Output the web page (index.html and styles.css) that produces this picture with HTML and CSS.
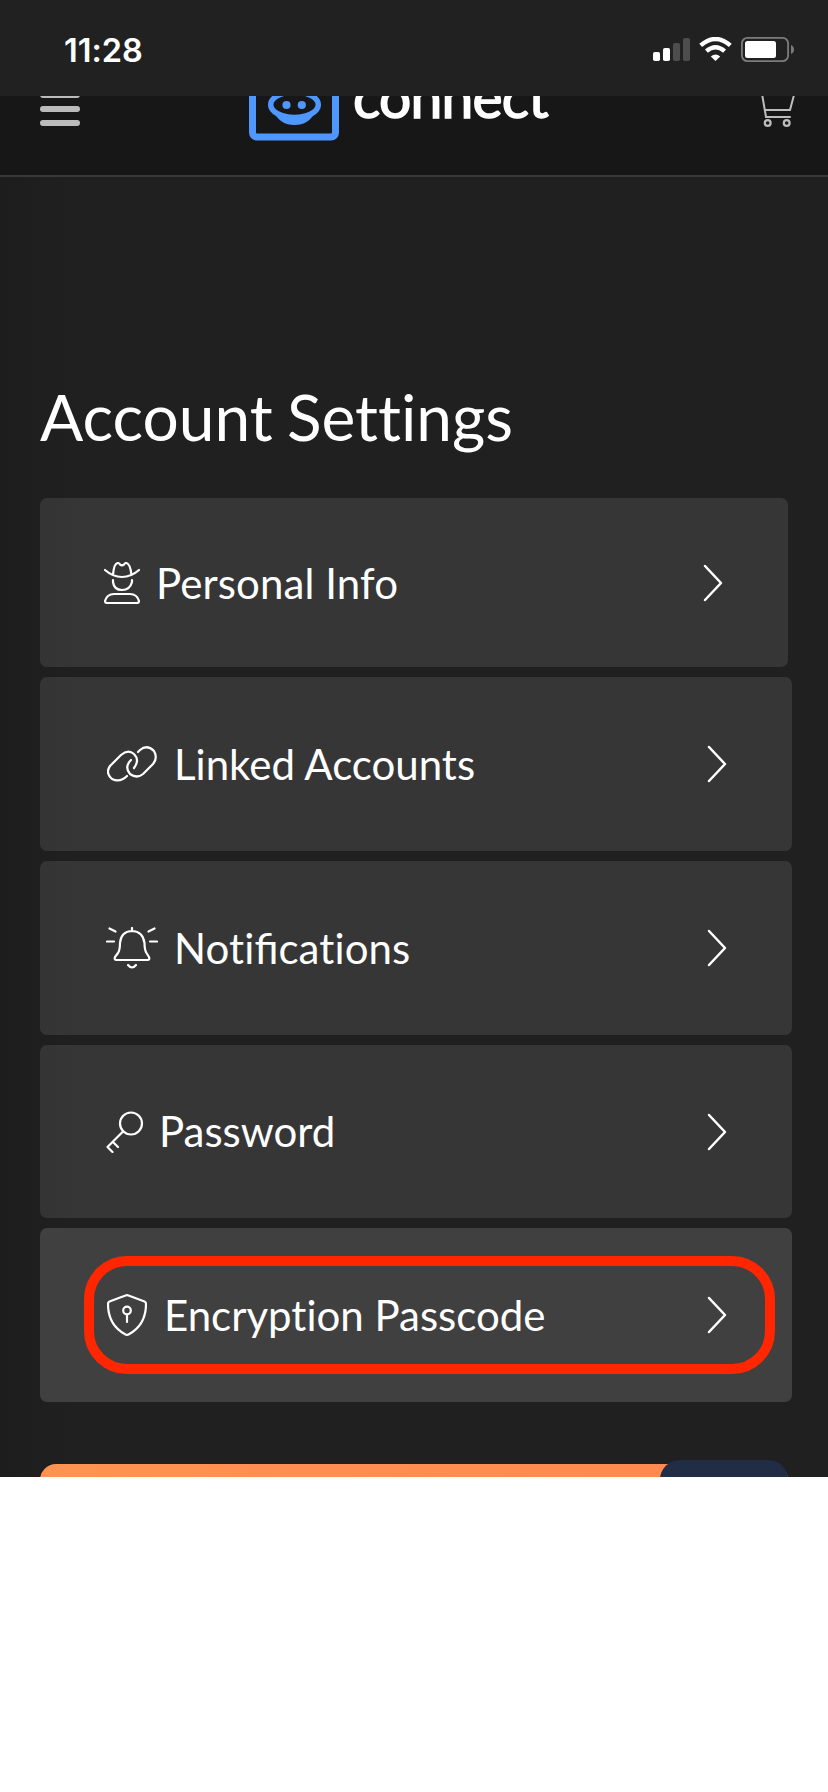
FILE: index.html
```html
<!DOCTYPE html>
<html lang="en">
<head>
    <meta charset="UTF-8">
    <meta name="viewport" content="width=device-width, initial-scale=1.0">
    <title>Account Settings</title>
    <link rel="stylesheet" href="styles.css">
</head>
<body>
    <div class="screen">
        <div class="status-bar">
            <span class="time">11:28</span>
            <svg class="status-icons" width="142" height="26" viewBox="0 0 142 26">
                <g fill="#fff">
                    <rect x="0" y="15" width="7" height="9" rx="1.8" />
                    <rect x="10" y="11" width="7" height="13" rx="1.8" />
                    <rect x="20" y="6" width="7" height="18" rx="1.8" fill="#4d4d4d" />
                    <rect x="30" y="1" width="7" height="23" rx="1.8" fill="#4d4d4d" />
                    <path d="M62.5 24 L57.8 19.4 Q62.5 15.6 67.2 19.4 Z" />
                    <rect x="92" y="4" width="31" height="17" rx="2.5" />
                </g>
                <path d="M47.7 8.4 Q62.5 -4.4 77.3 8.4 M53.4 14.1 Q62.5 6.2 71.6 14.1" fill="none" stroke="#fff" stroke-width="4.3" />
                <rect x="88.9" y="0.9" width="46.2" height="23.2" rx="5.5" fill="none" stroke="#7c7c7c" stroke-width="1.8" />
                <path d="M138 8 Q141 9.5 141 12.5 Q141 15.5 138 17 Z" fill="#7c7c7c" />
            </svg>
        </div>
        <header class="header">
            <button class="menu" aria-label="Menu"><i></i><i></i><i></i></button>
            <div class="logo">
                <svg width="90" height="90" viewBox="0 0 90 90">
                    <rect x="3.5" y="3.5" width="83" height="82.5" rx="4.5" fill="none" stroke="#4f97ff" stroke-width="7" />
                    <ellipse cx="45.5" cy="53.7" rx="23.8" ry="12.8" fill="none" stroke="#4f97ff" stroke-width="5.5" />
                    <path d="M25 61 Q45.5 70 66 61 Q60 74 45.5 74 Q31 74 25 61 Z" fill="#4f97ff" />
                    <circle cx="37.5" cy="54" r="4.1" fill="#4f97ff" />
                    <circle cx="52.8" cy="54" r="4.1" fill="#4f97ff" />
                </svg>
                <span class="brand">connect</span>
            </div>
            <svg class="cart" width="38" height="44" viewBox="0 0 38 44" fill="none" stroke="#bdbdbd" stroke-width="2" stroke-linecap="round">
                <path d="M1 5 H4 L9 34 H33 M4.5 12 H37 L33 27 H8" />
                <circle cx="10.7" cy="40" r="2.9" stroke-width="2.2" />
                <circle cx="29.7" cy="40" r="2.9" stroke-width="2.2" />
            </svg>
        </header>
        <main>
            <h1>Account Settings</h1>
            <nav class="settings">
                <a class="row first">
                    <svg class="icon" width="36" height="42" viewBox="0 0 36 42">
                        <path d="M1 8 Q9 15 18 15 Q27 15 35 8 M9 13 Q10 1 14 1 Q15 1 16 2.5 Q18 4 20 2.5 Q21 1 22 1 Q26 1 27.5 13 M9 18 V20 Q10 28 18 28 Q26 28 28 20 V18 M3 41 H33 Q35 41 35 39 Q33 32 26 32 H10 Q3 32 1 39 Q1 41 3 41 Z" />
                    </svg>
                    <span class="label">Personal Info</span>
                    <svg class="chevron" width="20" height="38" viewBox="0 0 20 38"><path d="M2 2 L18 19 L2 36" /></svg>
                </a>
                <a class="row linked">
                    <svg class="icon" width="50" height="36" viewBox="0 0 50 36">
                        <path d="M20 30 Q13 37 5 33 Q-2 27 3 20 L14 9 Q21 3 27 8 Q33 14 27 22 M24 14 Q17 21 23 28 Q30 33 36 28 L46 18 Q51 12 47 5 Q40 -2 33 4 L31 6" />
                    </svg>
                    <span class="label">Linked Accounts</span>
                    <svg class="chevron" width="20" height="38" viewBox="0 0 20 38"><path d="M2 2 L18 19 L2 36" /></svg>
                </a>
                <a class="row bell">
                    <svg class="icon" width="52" height="42" viewBox="0 0 52 42">
                        <path d="M26 1 V4 M26 4 Q37 4.5 38.5 16 Q38.5 23 40.5 26 L43 30 Q44 33 41.5 33 H10.5 Q8 33 9 30 L12 26 Q14 23 14 16 Q15 4.5 26 4 Z M22 38 Q26 43 30 38 M1 14.5 H8 M44 14.5 H51 M3.5 1.5 L9.5 4.5 M48.5 1.5 L42.5 4.5" />
                    </svg>
                    <span class="label">Noti<span class="lig">fi</span>cations</span>
                    <svg class="chevron" width="20" height="38" viewBox="0 0 20 38"><path d="M2 2 L18 19 L2 36" /></svg>
                </a>
                <a class="row key">
                    <svg class="icon" width="38" height="42" viewBox="0 0 38 42">
                        <circle cx="25" cy="12.5" r="11" />
                        <path d="M17 20.5 L1.5 36 L6.5 41 M7 31 L12 36" />
                    </svg>
                    <span class="label">Password</span>
                    <svg class="chevron" width="20" height="38" viewBox="0 0 20 38"><path d="M2 2 L18 19 L2 36" /></svg>
                </a>
                <a class="row active">
                    <svg class="icon" width="40" height="42" viewBox="0 0 40 42">
                        <path d="M18.5 1.5 Q20 0.8 21.5 1.5 L37.5 7.5 Q39 8 39 10 Q39 31 21.5 40.5 Q20 41.3 18.5 40.5 Q1 31 1 10 Q1 8 2.5 7.5 Z M20 20.5 V28" />
                        <circle cx="20" cy="16.5" r="3.8" />
                    </svg>
                    <span class="label">Encryption Passcode</span>
                    <svg class="chevron" width="20" height="38" viewBox="0 0 20 38"><path d="M2 2 L18 19 L2 36" /></svg>
                    <div class="highlight"></div>
                </a>
            </nav>
            <div class="promo">
                <div class="chat"></div>
            </div>
        </main>
    </div>
</body>
</html>
```

FILE: styles.css
```css
* {
    box-sizing: border-box;
}
body {
    margin: 0;
    background-color: #fff;
    color: #fff;
    font-family: Lato, sans-serif;
    font-variant-ligatures: none;
}
.screen {
    height: 1477px;
    overflow: hidden;
    background: linear-gradient(to right, #1d1d1d, #202020 75px);
}
.status-bar {
    height: 96px;
    padding: 0 33px 0 64px;
    display: flex;
    justify-content: space-between;
    align-items: center;
    background-color: #212121;
}
.time {
    font-family: Inter, sans-serif;
    font-size: 32.5px;
    font-weight: 600;
    padding-top: 4px;
}
.status-icons {
    margin-top: 4px;
}
.header {
    height: 81px;
    padding: 0 33px 0 40px;
    display: flex;
    align-items: flex-end;
    overflow: hidden;
    background-color: #171717;
    border-bottom: 2px solid #383838;
}
.menu {
    width: 40px;
    padding: 0;
    margin-bottom: 49px;
    border: 0;
    background: none;
    display: flex;
    flex-direction: column;
    gap: 8px;
}
.menu i {
    height: 6px;
    border-radius: 3px;
    background-color: #bbb;
}
.logo {
    display: flex;
    align-items: flex-end;
    gap: 14px;
    margin-left: 169px;
    margin-bottom: 34px;
}
.brand {
    font-size: 57px;
    line-height: 60px;
    letter-spacing: -0.8px;
    margin-bottom: 15px;
    -webkit-text-stroke: 1.5px #fff;
}
.cart {
    margin-left: auto;
    margin-bottom: 48px;
}
main {
    padding: 0 36px 0 40px;
}
h1 {
    margin: 200px 0 0;
    font-size: 64px;
    font-weight: 400;
    line-height: 80px;
    word-spacing: -2px;
}
.settings {
    margin-top: 41px;
    display: flex;
    flex-direction: column;
    gap: 10px;
}
.row {
    position: relative;
    height: 174px;
    padding: 0 65px 0 66px;
    display: flex;
    align-items: center;
    border-radius: 7px;
    background: linear-gradient(to right, #343434, #363636 50px);
    font-size: 42px;
}
.label {
    padding-bottom: 1px;
    white-space: nowrap;
}
.lig {
    font-variant-ligatures: normal;
}
.first {
    width: 748px;
    height: 169px;
    padding-left: 64px;
}
.first .label {
    margin-left: 16px;
    padding: 1px 0 0;
    letter-spacing: 0.1px;
}
.linked {
    padding-left: 67px;
}
.linked .label {
    margin-left: 17px;
}
.bell .label {
    margin-left: 16px;
    letter-spacing: 0.1px;
}
.bell .lig {
    letter-spacing: 0;
}
.key {
    height: 173px;
}
.key .label {
    margin-left: 15px;
}
.active {
    padding-left: 67px;
    background: #404040;
}
.active .label {
    margin-left: 17px;
}
.icon {
    fill: none;
    stroke: #fff;
    stroke-width: 2.2;
    stroke-linecap: round;
    stroke-linejoin: round;
}
.chevron {
    margin-left: auto;
    fill: none;
    stroke: #fff;
    stroke-width: 2.5;
    stroke-linecap: round;
    stroke-linejoin: round;
}
.highlight {
    position: absolute;
    left: 44px;
    top: 28px;
    width: 691px;
    height: 118px;
    border: 10px solid #ff2600;
    border-radius: 43px;
}
.promo {
    position: relative;
    width: 748px;
    height: 80px;
    margin-top: 62px;
    border-radius: 16px;
    background: linear-gradient(to right, #ff9351, #ff874f);
}
.chat {
    position: absolute;
    right: 0;
    top: -4px;
    width: 128px;
    height: 80px;
    border-radius: 20px;
    background-color: #202d44;
}
```
